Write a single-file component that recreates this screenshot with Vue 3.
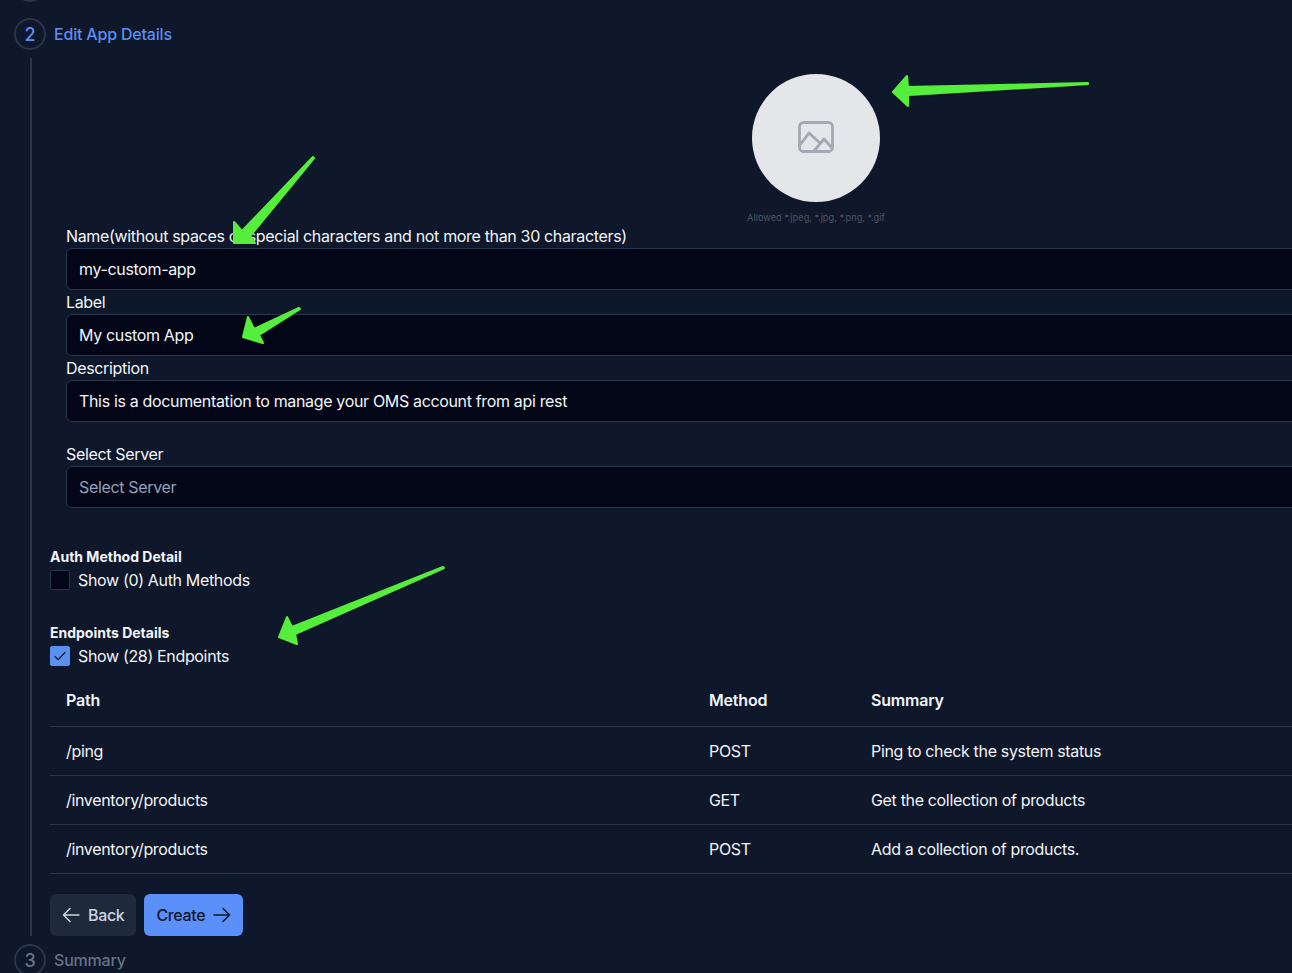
<template>
  <div class="page">
    <div class="stepper">
      <div class="step-head step-done">
        <span class="step-num"></span>
      </div>

      <div class="step-head step-active">
        <span class="step-num">2</span>
        <span class="step-title">Edit App Details</span>
      </div>

      <div class="step-body">
        <div class="avatar-block">
          <div class="avatar">
            <svg width="36" height="32" viewBox="0 0 36 32" fill="none" stroke="#a3a8b2" stroke-width="2.8" stroke-linecap="round" stroke-linejoin="round">
              <rect x="1.5" y="1.5" width="33" height="29" rx="4" />
              <path d="M2 24l9-12 11 10" />
              <path d="M16 30l10-12 8 9" />
            </svg>
          </div>
          <p class="allowed">Allowed *.jpeg, *.jpg, *.png, *.gif</p>
        </div>

        <div class="fields">
          <div v-for="field in fields" :key="field.label" class="field" :class="{ spaced: field.spaced }">
            <label>{{ field.label }}</label>
            <input type="text" :value="field.value" :placeholder="field.placeholder" />
          </div>
        </div>

        <section class="toggle-block first">
          <h4>Auth Method Detail</h4>
          <label class="check-row">
            <span class="box"></span>
            Show (0) Auth Methods
          </label>
        </section>

        <section class="toggle-block second">
          <h4>Endpoints Details</h4>
          <label class="check-row">
            <span class="box checked">
              <svg width="14" height="14" viewBox="0 0 14 14" fill="none" stroke="#0f172a" stroke-width="1.2" stroke-linecap="round" stroke-linejoin="round">
                <path d="M2 7.5l3.2 3.2L12 3.5" />
              </svg>
            </span>
            Show (28) Endpoints
          </label>
        </section>

        <table class="endpoints">
          <thead>
            <tr>
              <th class="col-path">Path</th>
              <th class="col-method">Method</th>
              <th>Summary</th>
            </tr>
          </thead>
          <tbody>
            <tr v-for="(row, i) in endpoints" :key="i">
              <td>{{ row.path }}</td>
              <td>{{ row.method }}</td>
              <td>{{ row.summary }}</td>
            </tr>
          </tbody>
        </table>

        <div class="actions">
          <button class="btn btn-back">
            <svg width="18" height="18" viewBox="0 0 18 18" fill="none" stroke="currentColor" stroke-width="1.5" stroke-linecap="round" stroke-linejoin="round">
              <path d="M17 9H1.5M8 2.5L1.5 9 8 15.5" />
            </svg>
            Back
          </button>
          <button class="btn btn-create">
            Create
            <svg width="18" height="18" viewBox="0 0 18 18" fill="none" stroke="currentColor" stroke-width="1.5" stroke-linecap="round" stroke-linejoin="round">
              <path d="M1 9h15.5M10 2.5L16.5 9 10 15.5" />
            </svg>
          </button>
        </div>
      </div>

      <div class="step-head step-next">
        <span class="step-num">3</span>
        <span class="step-title">Summary</span>
      </div>
    </div>

    <!-- green annotations drawn over the screenshot -->
    <svg class="arrows" width="1292" height="973" viewBox="0 0 1292 973">
      <defs>
        <filter id="arrow-shadow" x="-10%" y="-10%" width="120%" height="130%">
          <feDropShadow dx="0" dy="1" stdDeviation="1" flood-color="#000" flood-opacity="0.45" />
        </filter>
      </defs>
      <g fill="#55ee3c" stroke="#55ee3c" stroke-width="2" stroke-linejoin="round" filter="url(#arrow-shadow)">
        <polygon v-for="(pts, i) in arrows" :key="i" :points="pts" />
      </g>
    </svg>
  </div>
</template>

<script setup>
const fields = [
  { label: 'Name(without spaces or special characters and not more than 30 characters)', value: 'my-custom-app' },
  { label: 'Label', value: 'My custom App' },
  { label: 'Description', value: 'This is a documentation to manage your OMS account from api rest' },
  { label: 'Select Server', value: '', placeholder: 'Select Server', spaced: true },
];

const endpoints = [
  { path: '/ping', method: 'POST', summary: 'Ping to check the system status' },
  { path: '/inventory/products', method: 'GET', summary: 'Get the collection of products' },
  { path: '/inventory/products', method: 'POST', summary: 'Add a collection of products.' },
];

const arrows = [
  '893,92 907,76 908,87 1088,83 1088,84 908,95 908,106',
  '234,243 234,222 242,231 313,157 314,158 250,236 255,243',
  '299,308 254,329 248,317 243,337 263,343 259,335 300,309',
  '279,637 287,617 292,627 443,567 444,568 295,634 297,644',
];
</script>

<style scoped>
.page {
  position: relative;
  width: 1292px;
  height: 973px;
  overflow: hidden;
  background: #0f172a;
  color: #f1f5f9;
  font-family: Inter, "Liberation Sans", sans-serif;
  font-size: 16px;
  letter-spacing: -0.34px;
}

.stepper {
  display: flex;
  flex-direction: column;
  padding-left: 14px;
  margin-top: -30px;
}

.step-head {
  display: flex;
  align-items: center;
  gap: 8px;
  height: 32px;
  font-weight: 500;
  letter-spacing: -0.19px;
}

.step-done {
  margin-bottom: 16px;
}

.step-num {
  display: flex;
  align-items: center;
  justify-content: center;
  flex: none;
  width: 32px;
  height: 32px;
  box-sizing: border-box;
  border: 2px solid #293548;
  border-radius: 50%;
  font-size: 18px;
}

.step-active {
  color: #5b8ff0;
}

.step-next {
  color: #64748b;
  margin-top: 8px;
}

.step-body {
  margin: 8px 0 0 16px;
  padding: 16px 0 0 18px;
  border-left: 2px solid #293548;
  width: 1532px;
}

.avatar-block {
  display: flex;
  flex-direction: column;
  align-items: center;
}

.avatar {
  display: flex;
  align-items: center;
  justify-content: center;
  width: 128px;
  height: 128px;
  border-radius: 50%;
  background: #e4e6ea;
}

.avatar svg {
  margin-bottom: 2px;
}

.allowed {
  margin: 10px 0 0;
  font-size: 9.25px;
  line-height: 11px;
  letter-spacing: 0;
  color: #4b5563;
}

.fields {
  padding: 0 16px;
  margin-top: 1px;
}

.field label {
  display: block;
  line-height: 24px;
}

.field input {
  display: block;
  width: 100%;
  height: 42px;
  box-sizing: border-box;
  padding: 0 12px;
  background: #020617;
  border: 1px solid #293548;
  border-radius: 6px;
  color: #f1f5f9;
  font: inherit;
  letter-spacing: inherit;
  outline: none;
}

.field input::placeholder {
  color: #94a3b8;
  opacity: 1;
}

.field.spaced {
  margin-top: 20px;
}

.toggle-block h4 {
  margin: 0;
  font-size: 14px;
  font-weight: 700;
  line-height: 20px;
  letter-spacing: 0;
}

.toggle-block.first {
  margin-top: 39px;
}

.toggle-block.second {
  margin-top: 33px;
}

.check-row {
  display: flex;
  align-items: center;
  gap: 8px;
  height: 20px;
  margin-top: 3px;
}

.box {
  display: flex;
  align-items: center;
  justify-content: center;
  width: 20px;
  height: 20px;
  box-sizing: border-box;
  background: #020617;
  border: 1px solid #293548;
  border-radius: 2px;
}

.box.checked {
  background: #5b8ff0;
  border-color: #5b8ff0;
}

.endpoints {
  width: 100%;
  margin-top: 10px;
  border-collapse: collapse;
  table-layout: fixed;
}

.endpoints th,
.endpoints td {
  padding: 0 16px;
  text-align: left;
  border-bottom: 1px solid #293548;
}

.endpoints th {
  height: 48px;
  padding-bottom: 2px;
  font-weight: 600;
  letter-spacing: -0.2px;
}

.endpoints td {
  height: 48px;
}

.col-path {
  width: 611px;
}

.col-method {
  width: 130px;
}

.actions {
  display: flex;
  gap: 8px;
  margin-top: 20px;
}

.btn {
  display: flex;
  align-items: center;
  justify-content: center;
  gap: 8px;
  height: 42px;
  padding: 0 12px;
  border: none;
  border-radius: 6px;
  font: inherit;
  font-weight: 500;
  letter-spacing: inherit;
}

.btn-back {
  background: #1e293b;
  color: #cbd5e1;
}

.btn-create {
  background: #5b8ff9;
  color: #0f172a;
}

.arrows {
  position: absolute;
  top: 0;
  left: 0;
  pointer-events: none;
}
</style>

<style>
html,
body {
  overflow: hidden;
  background: #0f172a;
}
</style>
